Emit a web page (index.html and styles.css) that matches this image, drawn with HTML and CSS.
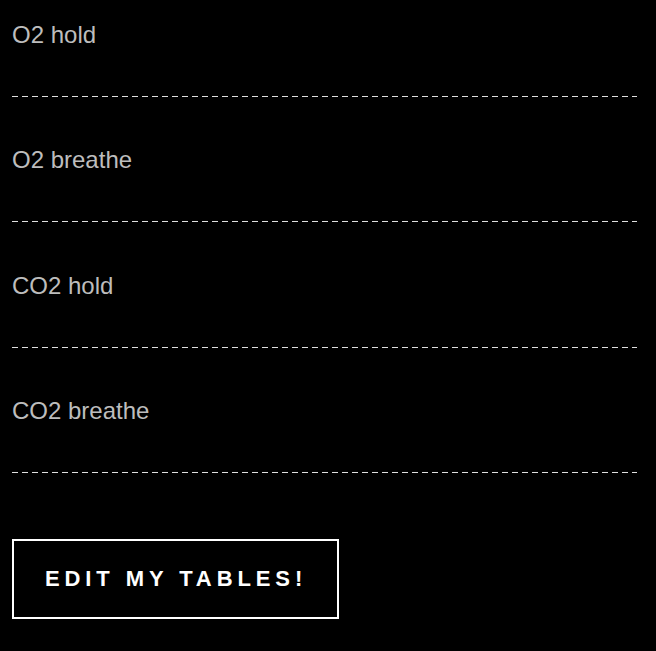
FILE: index.html
```html
<!DOCTYPE html>
<html>
<head>
<meta charset="utf-8">
<link rel="stylesheet" href="styles.css">
</head>
<body>
<div class="page">
  <div class="field">
    <label class="label">O2 hold</label>
    <div class="line"></div>
  </div>
  <div class="field">
    <label class="label">O2 breathe</label>
    <div class="line"></div>
  </div>
  <div class="field">
    <label class="label">CO2 hold</label>
    <div class="line"></div>
  </div>
  <div class="field">
    <label class="label">CO2 breathe</label>
    <div class="line"></div>
  </div>
  <button class="btn">EDIT MY TABLES!</button>
</div>
</body>
</html>
```

FILE: styles.css
```css
html, body {
  margin: 0;
  padding: 0;
  background: #000;
}
.page {
  padding: 21px 12px 0 12px;
  display: flex;
  flex-direction: column;
  align-items: flex-start;
  font-family: "Liberation Sans", Arial, sans-serif;
}
.field {
  width: 625px;
  display: flex;
  flex-direction: column;
  margin-bottom: 49.3px;
}
.label {
  font-size: 24px;
  line-height: 27px;
  color: #bdbdbd;
}
.line {
  margin-top: 48px;
  height: 1px;
  background: repeating-linear-gradient(to right, #e0e0e0 0, #e0e0e0 6px, transparent 6px, transparent 10px);
}
.btn {
  margin-top: 17px;
  height: 80px;
  box-sizing: border-box;
  background: #000;
  border: 2px solid #fff;
  color: #fff;
  font-family: "Liberation Sans", Arial, sans-serif;
  font-weight: bold;
  font-size: 22px;
  letter-spacing: 4.9px;
  padding: 0 30px 0 31px;
  cursor: pointer;
}
```
